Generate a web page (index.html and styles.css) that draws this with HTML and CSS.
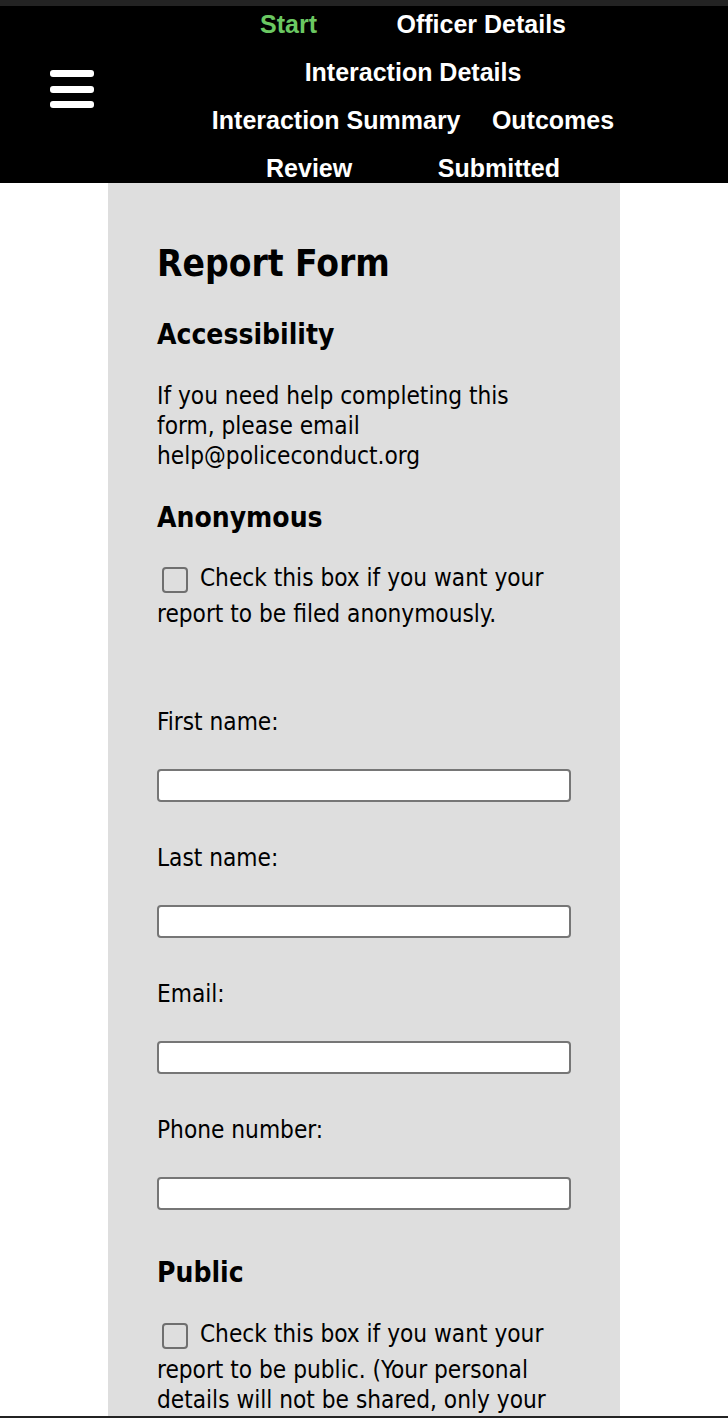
FILE: index.html
```html
<!DOCTYPE html>
<html lang="en">
<head>
<meta charset="utf-8">
<title>Report Form</title>
<link rel="stylesheet" href="styles.css">
</head>
<body>
<div class="topbar"></div>
<header class="header">
  <div class="menu" aria-label="Menu">
    <span class="bar"></span>
    <span class="bar"></span>
    <span class="bar"></span>
  </div>
  <nav class="nav">
    <a class="nav-item active">Start</a>
    <a class="nav-item">Officer Details</a>
    <a class="nav-item">Interaction Details</a>
    <a class="nav-item">Interaction Summary</a>
    <a class="nav-item">Outcomes</a>
    <a class="nav-item">Review</a>
    <a class="nav-item">Submitted</a>
  </nav>
</header>
<main class="card">
  <h1 class="title">Report Form</h1>
  <h2 class="section">Accessibility</h2>
  <p class="text">If you need help completing this form, please email help@policeconduct.org</p>
  <h2 class="section">Anonymous</h2>
  <p class="check-text"><input type="checkbox" class="check"> Check this box if you want your report to be filed anonymously.</p>
  <div class="fields">
    <label class="label">First name:</label>
    <input type="text" class="field">
    <label class="label">Last name:</label>
    <input type="text" class="field">
    <label class="label">Email:</label>
    <input type="text" class="field">
    <label class="label">Phone number:</label>
    <input type="text" class="field">
  </div>
  <h2 class="section section-public">Public</h2>
  <p class="check-text"><input type="checkbox" class="check"> Check this box if you want your report to be public. (Your personal details will not be shared, only your report.)</p>
</main>
<div class="bottombar"></div>
</body>
</html>
```

FILE: styles.css
```css
html, body {
  margin: 0;
  padding: 0;
  background: #ffffff;
}
body {
  font-family: "DejaVu Sans Condensed", "DejaVu Sans", sans-serif;
  font-stretch: condensed;
  color: #000;
  overflow: hidden;
  height: 1418px;
}
.topbar {
  height: 6px;
  background: #232323;
}
.header {
  height: 177px;
  background: #000;
  display: flex;
  align-items: flex-start;
  overflow: hidden;
}
.menu {
  margin: 64px 0 0 50px;
  width: 44px;
  display: flex;
  flex-direction: column;
  gap: 8.5px;
  flex: none;
}
.bar {
  display: block;
  height: 7px;
  background: #fff;
  border-radius: 3px;
}
.nav {
  margin-left: 96.5px;
  width: 445px;
  display: flex;
  flex-wrap: wrap;
  justify-content: space-evenly;
  row-gap: 12px;
  font-family: "Liberation Sans", Arial, sans-serif;
  font-stretch: normal;
  font-weight: bold;
  font-size: 25px;
  line-height: 36px;
}
.nav-item {
  color: #fff;
  margin: 0 10px;
  white-space: nowrap;
}
.nav-item.active {
  color: #6bc862;
}
.card {
  width: 414px;
  margin: 0 auto;
  background: #dedede;
  padding: 60px 49px 200px;
}
.title {
  font-size: 36.8px;
  font-weight: bold;
  line-height: 42px;
  margin: 0 0 33px;
}
.section {
  font-size: 28px;
  font-weight: bold;
  line-height: 33px;
  margin: 0 0 30px;
}
.text {
  font-size: 24.2px;
  line-height: 30px;
  margin: 0 0 30px;
}
.check-text {
  font-size: 24.2px;
  line-height: 30px;
  margin: -3px 0 0;
}
.check {
  appearance: none;
  -webkit-appearance: none;
  display: inline-block;
  width: 26px;
  height: 26px;
  box-sizing: border-box;
  border: 2.5px solid #6f6f6f;
  border-radius: 4px;
  background: transparent;
  margin: 6px 5px 6px 5px;
  vertical-align: -12.7px;
}
.fields {
  display: flex;
  flex-direction: column;
  padding-top: 78px;
}
.label {
  font-size: 24.2px;
  line-height: 30px;
  margin-bottom: 32px;
}
.field {
  box-sizing: border-box;
  width: 414px;
  height: 33px;
  margin: 0 0 41px;
  border: 2px solid #767676;
  border-radius: 4px;
  background: #fff;
  padding: 0;
}
.fields .field:last-child {
  margin-bottom: 46px;
}
.section-public {
  margin-bottom: 31px;
}
.bottombar {
  position: fixed;
  left: 0;
  right: 0;
  bottom: 0;
  height: 2px;
  background: #232323;
}
```
